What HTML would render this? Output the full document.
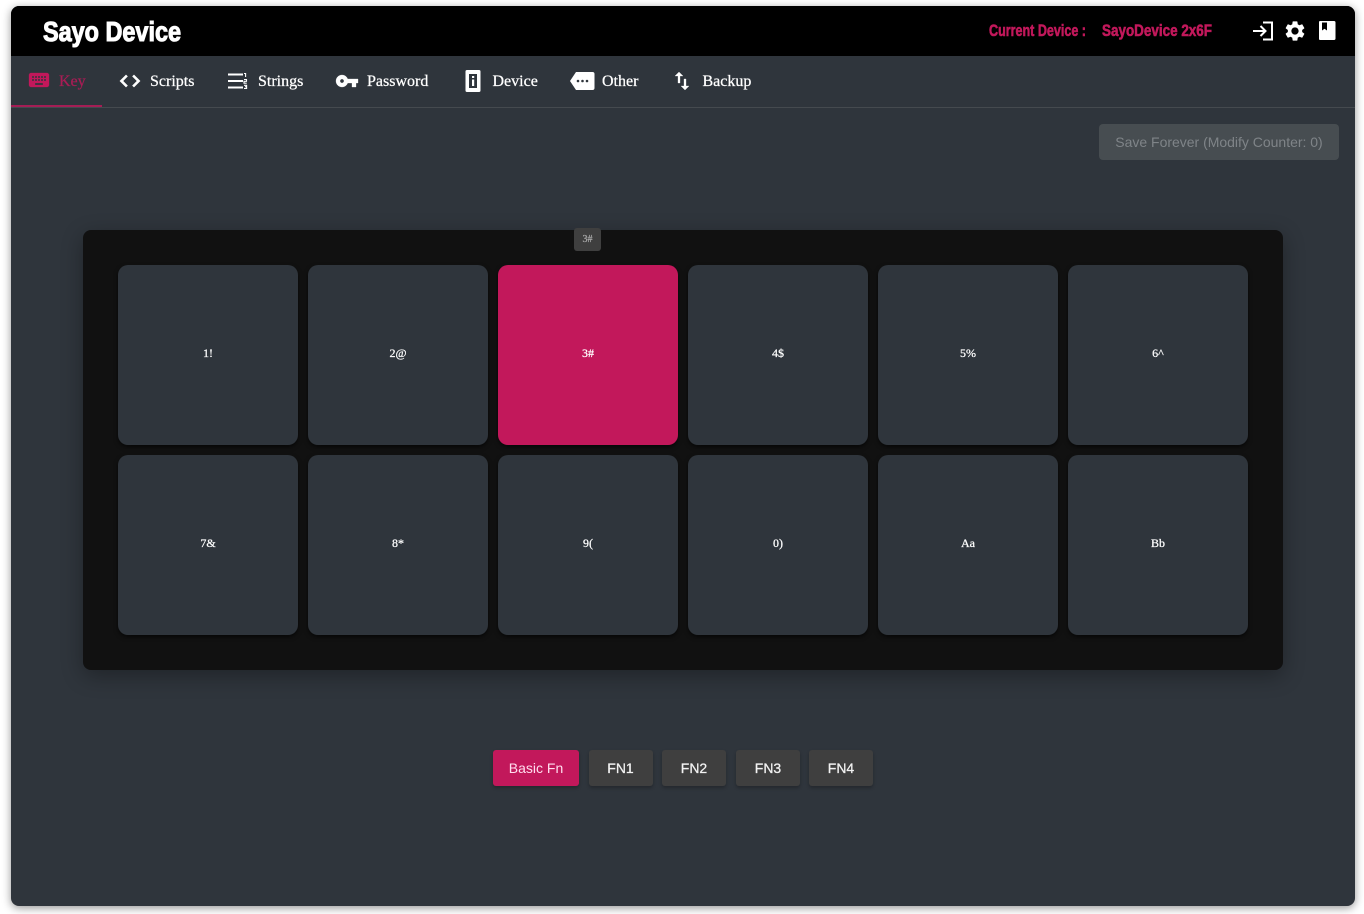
<!DOCTYPE html>
<html>
<head>
<meta charset="utf-8">
<title>Sayo Device</title>
<style>
html,body{margin:0;padding:0;width:1364px;height:914px;overflow:hidden;background:#fff}
*{box-sizing:border-box}
.abs,.tab,.tab svg,.key,.fn{position:absolute}
#app{position:absolute;left:11px;top:6px;width:1344px;height:900px;background:#2f353c;border-radius:8px;box-shadow:0 2px 9px rgba(0,0,0,.42)}
#head{position:absolute;left:11px;top:6px;width:1344px;height:50px;background:#000;border-radius:8px 8px 0 0}
#rule{position:absolute;left:11px;top:107px;width:1344px;height:1px;background:#454a4f}
#ind{position:absolute;left:11px;top:105px;width:91px;height:2px;background:#a51d55}
.tab{font:16px/20px "Liberation Serif",serif;color:#fff;top:72px;white-space:nowrap;-webkit-text-stroke:.25px #fff}
.tab.on{color:#a81d55;-webkit-text-stroke:.25px #a81d55}
#save{position:absolute;left:1099px;top:124px;width:240px;height:36px;border-radius:4px;background:#474d51;color:#7f8488;font:14px/36px "Liberation Sans",sans-serif;text-align:center;letter-spacing:-.01px}
#panel{position:absolute;left:83px;top:230px;width:1200px;height:440px;background:#111;border-radius:8px;box-shadow:0 6px 22px rgba(0,0,0,.32)}
.key{width:180px;height:180px;background:#2f353c;border-radius:10px;box-shadow:0 2px 4px rgba(0,0,0,.6);color:#fff;font:12px/176px "Liberation Serif",serif;text-align:center;-webkit-text-stroke:.25px #fff}
.key.on{background:#c2185b}
#tip{position:absolute;left:574px;top:228px;width:27px;height:23px;background:#3f3f3f;border-radius:3px;color:#a8a8a8;font:10px/23px "Liberation Serif",serif;text-align:center;-webkit-text-stroke:.25px #a8a8a8}
.fn{top:750px;height:36px;background:#3f3f3f;border-radius:3px;color:#f2f2f2;font:14px/36px "Liberation Sans",sans-serif;text-align:center;box-shadow:0 2px 3px rgba(0,0,0,.25);-webkit-text-stroke:.25px #f2f2f2}
.fn.on{background:#c2185b;color:#fde;-webkit-text-stroke:0}
</style>
</head>
<body>
<div id="app"></div>
<div id="head"></div>
<svg class="abs" style="left:0;top:0" width="1364" height="56">
  <text x="43" y="41" font-family="Liberation Sans, sans-serif" font-weight="700" font-size="28" fill="#fff" stroke="#fff" stroke-width="1.1" textLength="138" lengthAdjust="spacingAndGlyphs">Sayo Device</text>
  <text x="989" y="36" font-family="Liberation Sans, sans-serif" font-weight="700" font-size="17" fill="#c2185b" stroke="#c2185b" stroke-width=".6" textLength="97" lengthAdjust="spacingAndGlyphs">Current Device :</text>
  <text x="1102" y="36" font-family="Liberation Sans, sans-serif" font-weight="700" font-size="17" fill="#c2185b" stroke="#c2185b" stroke-width=".6" textLength="110" lengthAdjust="spacingAndGlyphs">SayoDevice 2x6F</text>
  <path d="M1253 31h12M1260.500 26l5 5-5 5M1263 22.500h9v17h-9" fill="none" stroke="#fff" stroke-width="2"/>
  <svg x="1283" y="19" width="24" height="24" viewBox="0 0 24 24"><path fill="#fff" d="M19.140,12.940c0.040-0.300,0.060-0.610,0.060-0.940c0-0.320-0.020-0.640-0.070-0.940l2.030-1.580c0.180-0.140,0.230-0.410,0.120-0.610l-1.920-3.320c-0.120-0.220-0.370-0.290-0.590-0.220l-2.390,0.960c-0.500-0.380-1.030-0.700-1.620-0.940L14.400,2.810c-0.040-0.240-0.240-0.410-0.480-0.410h-3.840c-0.240,0-0.430,0.170-0.470,0.410L9.250,5.350C8.660,5.590,8.120,5.920,7.630,6.290L5.240,5.330c-0.220-0.080-0.470,0-0.590,0.220L2.740,8.870C2.620,9.080,2.660,9.340,2.860,9.480l2.030,1.580C4.840,11.360,4.800,11.690,4.800,12s0.020,0.640,0.070,0.940l-2.030,1.580c-0.180,0.140-0.230,0.410-0.120,0.610l1.920,3.320c0.120,0.220,0.370,0.290,0.590,0.220l2.390-0.960c0.500,0.380,1.030,0.700,1.620,0.940l0.360,2.540c0.050,0.240,0.240,0.410,0.480,0.410h3.840c0.240,0,0.440-0.170,0.470-0.410l0.360-2.540c0.590-0.240,1.130-0.560,1.620-0.940l2.390,0.960c0.220,0.080,0.470,0,0.590-0.220l1.920-3.320c0.120-0.220,0.070-0.470-0.120-0.610L19.140,12.940z M12,15.600c-1.980,0-3.600-1.620-3.600-3.600s1.620-3.600,3.600-3.600s3.600,1.620,3.600,3.600S13.980,15.600,12,15.600z"/></svg>
  <path fill="#fff" fill-rule="evenodd" d="M1320 21h14a1.500 1.500 0 0 1 1.500 1.500v16a1.500 1.500 0 0 1-1.500 1.500h-14a1 1 0 0 1-1-1v-17a1 1 0 0 1 1-1zM1322 22.500v8l2.500-1.700 2.500 1.700v-8z"/>
</svg>

<div id="ind"></div>
<div id="rule"></div>

<svg class="abs" style="left:0;top:56px" width="800" height="50" viewBox="0 56 800 50">
  <svg x="27" y="68" width="24" height="24" viewBox="0 0 24 24"><path fill="#c2185b" stroke="#c2185b" stroke-width=".3" d="M20 5H4c-1.100 0-1.990.900-1.990 2L2 17c0 1.100.900 2 2 2h16c1.100 0 2-.900 2-2V7c0-1.100-.900-2-2-2zm-9 3h2v2h-2V8zm0 3h2v2h-2v-2zM8 8h2v2H8V8zm0 3h2v2H8v-2zm-1 2H5v-2h2v2zm0-3H5V8h2v2zm9 7H8v-2h8v2zm0-4h-2v-2h2v2zm0-3h-2V8h2v2zm3 3h-2v-2h2v2zm0-3h-2V8h2v2z"/></svg>
  <svg x="118" y="69" width="24" height="24" viewBox="0 0 24 24"><path fill="#fff" stroke="#fff" stroke-width=".6" d="M9.400 16.600L4.800 12l4.600-4.600L8 6l-6 6 6 6 1.400-1.400zm5.200 0l4.600-4.600-4.600-4.600L16 6l6 6-6 6-1.400-1.400z"/></svg>
  <path fill="#fff" d="M228 73.500h15v2h-15zM228 80h15v2h-15zM228 86.500h15v2h-15z"/>
  <path fill="none" stroke="#fff" stroke-width="1.100" d="M244 73.500h1.600v3.500M244 79.500h2.500v1.800h-2.500v1.900h2.700M244 85.300h2.600v1.400h-1.600h1.600v1.700h-2.600"/>
  <svg x="335" y="69" width="24" height="24" viewBox="0 0 24 24"><path fill="#fff" stroke="#fff" stroke-width=".3" d="M12.650 10C11.830 7.670 9.610 6 7 6c-3.310 0-6 2.690-6 6s2.690 6 6 6c2.610 0 4.830-1.670 5.650-4H17v4h4v-4h2v-4H12.650zM7 14c-1.100 0-2-.900-2-2s.900-2 2-2 2 .900 2 2-.900 2-2 2z"/></svg>
  <path fill="#fff" fill-rule="evenodd" d="M467 70h12a1.500 1.500 0 0 1 1.500 1.500v19a1.500 1.500 0 0 1-1.500 1.500h-12a1.500 1.500 0 0 1-1.500-1.500v-19a1.500 1.500 0 0 1 1.500-1.500zM469 74v14h8V74zM472 76h2.200v2H472zM472 79.500h2.200v6.500H472z"/>
  <path fill="#fff" fill-rule="evenodd" d="M576 72h16.500a2 2 0 0 1 2 2v14a2 2 0 0 1-2 2H576l-6-9zM578 79.700a1.300 1.300 0 1 0 0 2.600 1.300 1.300 0 0 0 0-2.600zM582.500 79.700a1.300 1.300 0 1 0 0 2.600 1.300 1.300 0 0 0 0-2.600zM587 79.700a1.300 1.300 0 1 0 0 2.600 1.300 1.300 0 0 0 0-2.600z"/>
  <svg x="670" y="69" width="24" height="24" viewBox="0 0 24 24"><path fill="#fff" stroke="#fff" stroke-width=".3" d="M9 3L5 6.990h3V14h2V6.990h3L9 3zm7 14.010V10h-2v7.010h-3L15 21l4-3.990h-3z"/></svg>
</svg>

<div class="tab on" style="left:59px">Key</div>
<div class="tab" style="left:150px">Scripts</div>
<div class="tab" style="left:258px">Strings</div>
<div class="tab" style="left:367px">Password</div>
<div class="tab" style="left:492.500px">Device</div>
<div class="tab" style="left:602px">Other</div>
<div class="tab" style="left:702.500px">Backup</div>

<div id="save">Save Forever (Modify Counter: 0)</div>

<div id="panel"></div>
<div class="key" style="left:118px;top:265px">1!</div>
<div class="key" style="left:308px;top:265px">2@</div>
<div class="key on" style="left:498px;top:265px">3#</div>
<div class="key" style="left:688px;top:265px">4$</div>
<div class="key" style="left:878px;top:265px">5%</div>
<div class="key" style="left:1068px;top:265px">6^</div>
<div class="key" style="left:118px;top:455px">7&amp;</div>
<div class="key" style="left:308px;top:455px">8*</div>
<div class="key" style="left:498px;top:455px">9(</div>
<div class="key" style="left:688px;top:455px">0)</div>
<div class="key" style="left:878px;top:455px">Aa</div>
<div class="key" style="left:1068px;top:455px">Bb</div>
<div id="tip">3#</div>

<div class="fn on" style="left:493px;width:86px">Basic Fn</div>
<div class="fn" style="left:589px;width:64px;padding-right:1px">FN1</div>
<div class="fn" style="left:662px;width:64px">FN2</div>
<div class="fn" style="left:736px;width:64px">FN3</div>
<div class="fn" style="left:809px;width:64px">FN4</div>
</body>
</html>
